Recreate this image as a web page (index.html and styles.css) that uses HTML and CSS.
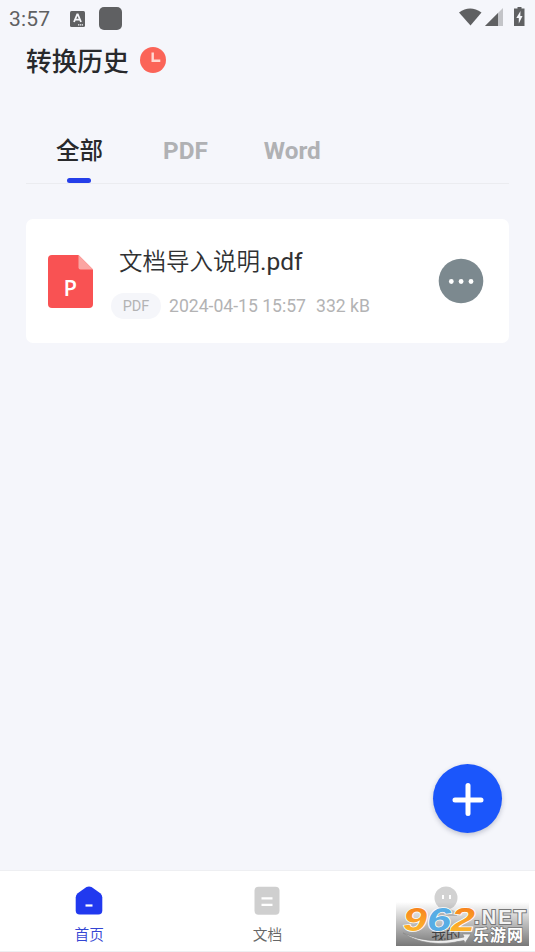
FILE: index.html
```html
<!DOCTYPE html>
<html lang="zh-CN">
<head>
<meta charset="utf-8">
<title>转换历史</title>
<link rel="stylesheet" href="styles.css">
</head>
<body>
<div class="screen">
  <div class="status">
    <span class="time">3:57</span>
    <svg class="ime" width="15" height="16" viewBox="0 0 15 16"><rect width="15" height="16" rx="1.5" fill="#5f6062"/><path d="M4 11 7.2 3.5h.6L11 11M5.2 8.6h4.6" fill="none" stroke="#f5f6fa" stroke-width="1.8"/><path d="M8 13.8h5" stroke="#f5f6fa" stroke-width="1.3" stroke-dasharray="1.3 .6"/></svg>
    <span class="app"></span>
    <svg class="signals" width="68" height="22" viewBox="0 0 68 22" fill="#5f6062"><path d="M0 5.500Q11 -2.500 22.500 5.500L11.500 18.500Z"/><path d="M44 1v18H26Z" fill="#c3c4c8"/><path d="M39 6V19H26Z"/><path d="M58.500 0h4v1.500h3V19H55V1.500h3.500Z"/><path d="M61.500 4 57.300 11h2.500v5.500L63.500 9h-2.200Z" fill="#f5f6fa"/></svg>
  </div>
  <header class="header">
    <h1>转换历史</h1>
    <svg width="26" height="26" viewBox="0 0 26 26"><circle cx="13" cy="13" r="13" fill="#fb6458"/><path d="M12.700 5.500v8.300h7.600" fill="none" stroke="#ffd9d3" stroke-width="2.400"/></svg>
  </header>
  <nav class="tabs">
    <span class="tab active">全部</span>
    <span class="tab pdf">PDF</span>
    <span class="tab word">Word</span>
  </nav>
  <main class="list">
    <article class="card">
      <svg class="file" width="45" height="53" viewBox="0 0 45 53"><path d="M4 0H30.500L45 14.500V49a4 4 0 0 1-4 4H4a4 4 0 0 1-4-4V4a4 4 0 0 1 4-4Z" fill="#f95253"/><path d="M30.500 0 45 14.500H32.500a2 2 0 0 1-2-2Z" fill="#fba5a2"/><text x="15.500" y="41" class="file-letter">P</text></svg>
      <div class="info">
        <div class="name">文档导入说明<span class="ext">.pdf</span></div>
        <div class="meta"><span class="tag">PDF</span><span class="date">2024-04-15 15:57</span><span class="size">332 kB</span></div>
      </div>
      <svg class="more" width="46" height="46" viewBox="0 0 46 46"><circle cx="23" cy="23" r="22.300" fill="#7c898f"/><g fill="#fff"><circle cx="13.300" cy="23.500" r="2.400"/><circle cx="23.100" cy="23.500" r="2.400"/><circle cx="33" cy="23.500" r="2.400"/></g></svg>
    </article>
  </main>
  <div class="fab"><svg width="32" height="34" viewBox="0 0 32 34"><path d="M16 3.500v28M3 18h26" stroke="#fff" stroke-width="5" stroke-linecap="round"/></svg></div>
  <footer class="bottom">
    <div class="item on">
      <svg width="28" height="30" viewBox="0 0 28 30"><path d="M11.500 1.100Q14 -.3 16.500 1.100L25.300 7.300Q27.300 9 27.300 11.500V24.500a4 4 0 0 1-4 4H4.700a4 4 0 0 1-4-4V11.500Q.7 9 2.700 7.300Z" fill="#2139ef"/><path d="M10.500 19.500h7" stroke="#fff" stroke-width="2.200"/></svg>
      <span>首页</span>
    </div>
    <div class="item">
      <svg width="28" height="30" viewBox="0 0 28 30"><rect x="1.500" y=".8" width="25" height="28" rx="4" fill="#cfcfcf"/><path d="M8.500 12.300h11M8.500 18.800h11" stroke="#fff" stroke-width="2.200"/></svg>
      <span>文档</span>
    </div>
    <div class="item">
      <svg width="28" height="30" viewBox="0 0 28 30"><circle cx="14" cy="12" r="11.500" fill="#d2d2d2"/><path d="M3 30q0-7 11-7t11 7Z" fill="#d2d2d2"/><path d="M11 9v4M18 9v4" stroke="#fff" stroke-width="2"/></svg>
      <span>我的</span>
    </div>
  </footer>
  <svg class="watermark" width="133" height="44" viewBox="0 0 133 44">
    <defs>
      <linearGradient id="shade" x1="0" y1="0" x2="0" y2="1"><stop offset="0" stop-opacity="0"/><stop offset="1" stop-opacity=".53"/></linearGradient>
      <linearGradient id="orange" x1="0" y1="0" x2="0" y2="1"><stop offset="0.2" stop-color="#f7821e"/><stop offset="0.8" stop-color="#fdb42c"/></linearGradient>
    </defs>
    <rect width="133" height="44" fill="url(#shade)"/>
    <path d="M7 31Q33 44 68 35l-1.500-3 8.500 0-6 9-1-2.500Q31 47 7 31Z" fill="#eee" stroke="#888" stroke-width=".7"/>
    <g class="digits">
      <text x="7" y="28.500" textLength="24" lengthAdjust="spacingAndGlyphs" fill="url(#orange)">9</text>
      <text x="31" y="28.500" textLength="24" lengthAdjust="spacingAndGlyphs" fill="#58ade5">6</text>
      <text x="55" y="28.500" textLength="24" lengthAdjust="spacingAndGlyphs" fill="url(#orange)">2</text>
    </g>
    <text class="net" x="78" y="22" textLength="52">.NET</text>
    <text class="site" x="77" y="39" textLength="50">乐游网</text>
  </svg>
</div>
</body>
</html>
```
FILE: styles.css
```css
* { box-sizing: border-box; }
body {
  margin: 0;
  background: #f5f6fb;
  font-family: Roboto, "Noto Sans CJK SC", sans-serif;
}
.screen {
  position: relative;
  display: flex;
  flex-direction: column;
  height: 952px;
  overflow: hidden;
}
.status {
  display: flex;
  align-items: center;
  height: 37px;
  padding: 0 9px;
  color: #5f6062;
}
.time { width: 61px; font-size: 21px; letter-spacing: .2px; }
.app {
  width: 23px;
  height: 23px;
  margin-left: 14px;
  border-radius: 5px;
  background: #5f6062;
}
.signals { margin: -2px -1px 0 auto; }
.header {
  display: flex;
  align-items: center;
  gap: 11px;
  height: 46px;
  padding-left: 26px;
}
h1 {
  margin: 0;
  padding-top: 3px;
  color: #28292c;
  font-size: 25.700px;
  font-weight: 500;
  line-height: 38px;
}
.tabs {
  display: flex;
  height: 101px;
  margin: 0 26px;
  padding: 48px 0 0 30px;
  border-bottom: 1px solid #ebecf0;
  font-size: 24.300px;
  font-weight: 700;
  line-height: 40px;
  color: #b0b1b4;
}
.tab { position: relative; }
.active { width: 47px; color: #28292c; font-size: 23.500px; font-weight: 500; }
.active::after {
  content: "";
  position: absolute;
  left: 11px;
  bottom: 0;
  width: 24px;
  height: 5px;
  border-radius: 3px;
  background: #243ee9;
}
.pdf { margin-left: 60px; }
.word { margin-left: 56px; }
.list { flex: 1; padding: 35px 26px 0; }
.card {
  display: flex;
  align-items: center;
  height: 124px;
  padding: 0 25px 0 22px;
  border-radius: 7px;
  background: #fff;
}
.file-letter { font: 600 22px "Open Sans", sans-serif; fill: #fff; }
.info { flex: 1; margin-left: 18px; }
.name {
  padding-left: 8px;
  color: #303133;
  font-size: 23.500px;
  font-weight: 350;
  line-height: 36px;
}
.ext { font-size: 24.500px; font-weight: 400; }
.meta {
  display: flex;
  align-items: center;
  margin-top: 13px;
  color: #b3b3b4;
  font-size: 17.600px;
  line-height: 26px;
}
.tag {
  width: 50px;
  height: 26px;
  border-radius: 13px;
  background: #f5f6fa;
  font-size: 14.500px;
  line-height: 27px;
  text-align: center;
}
.date { margin-left: 8px; }
.size { margin-left: 10px; }
.fab {
  position: absolute;
  left: 433px;
  top: 764px;
  display: grid;
  place-items: center;
  width: 69px;
  height: 69px;
  border-radius: 50%;
  background: #1b56fb;
  box-shadow: 0 2px 5px rgba(30, 40, 80, .25);
}
.bottom {
  display: grid;
  grid-template-columns: repeat(3, 1fr);
  height: 82px;
  border-top: 1px solid #eeeff2;
  border-bottom: 1px solid #eeeff2;
  background: #fff;
}
.item {
  display: flex;
  flex-direction: column;
  align-items: center;
  padding-top: 15px;
  color: #666;
  font-size: 14.700px;
  font-weight: 350;
  line-height: 24px;
}
.item span { margin-top: 7px; }
.on { color: #3445d3; }
.watermark { position: absolute; left: 396px; top: 902px; }
.digits {
  font: italic 700 34px "Liberation Sans", sans-serif;
  stroke: #fff;
  stroke-width: 1.500px;
  paint-order: stroke;
}
.net {
  font: 700 20px "Liberation Sans", sans-serif;
  fill: #f4f4f4;
  stroke: #777;
  stroke-width: 2px;
  paint-order: stroke;
}
.site {
  font: 700 16px "Noto Sans CJK SC", sans-serif;
  fill: #fff;
  stroke: #777;
  stroke-width: 1.500px;
  paint-order: stroke;
}
```
